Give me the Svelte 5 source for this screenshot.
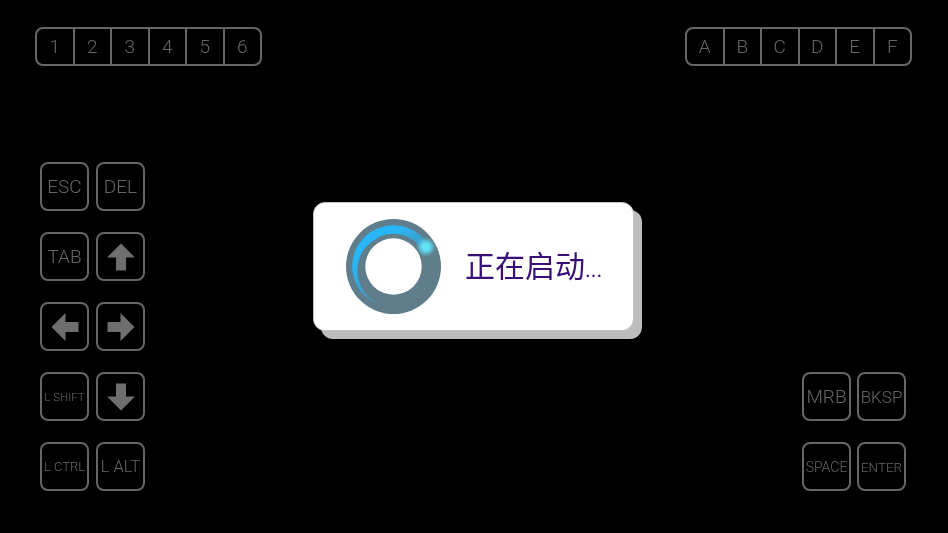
<script>
  const nums = ['1', '2', '3', '4', '5', '6'];
  const letters = ['A', 'B', 'C', 'D', 'E', 'F'];
  const leftKeys = [
    { t: 'ESC', s: 's19' }, { t: 'DEL', s: 's19' },
    { t: 'TAB', s: 's19' }, { i: 0 },
    { i: 270 }, { i: 90 },
    { t: 'L SHIFT', s: 's115' }, { i: 180 },
    { t: 'L CTRL', s: 's13' }, { t: 'L ALT', s: 's165' }
  ];
  const rightKeys = [
    { t: 'MRB', s: 's19' }, { t: 'BKSP', s: 's17' },
    { t: 'SPACE', s: 's14' }, { t: 'ENTER', s: 's135' }
  ];

  const cx = 50, cy = 50, N = 60;
  const pt = (r, a) => {
    const rad = (a * Math.PI) / 180;
    return `${(cx + r * Math.sin(rad)).toFixed(2)} ${(cy - r * Math.cos(rad)).toFixed(2)}`;
  };
  const start = 59, end = -167;
  const segs = Array.from({ length: N }, (_, i) => {
    const f = i / N;
    const a0 = start + (end - start) * f;
    const a1 = start + (end - start) * (f + 1 / N + 0.004);
    const w = f < 0.4 ? 8.4 : 8.4 * (1 - (f - 0.4) / 0.6) + 0.3;
    const op = f < 0.22 ? 0.45 + (f / 0.22) * 0.55 : f > 0.65 ? Math.max(0, 1 - (f - 0.65) / 0.35) : 1;
    const ro = 41.2, ri = ro - w;
    return {
      d: `M${pt(ro, a0)} A${ro} ${ro} 0 0 0 ${pt(ro, a1)} L${pt(ri, a1)} A${ri} ${ri} 0 0 1 ${pt(ri, a0)}Z`,
      op: op.toFixed(3)
    };
  });
</script>

{#snippet key(k)}
  <div class="key {k.s ?? ''}">
    {#if k.t}
      {k.t}
    {:else}
      <svg class="arrow" viewBox="0 0 28 28" style="transform: rotate({k.i}deg)" aria-hidden="true">
        <path d="M14 0.5 L28 14.5 L19 14.5 L19 27.5 L9 27.5 L9 14.5 L0 14.5 Z" />
      </svg>
    {/if}
  </div>
{/snippet}

<div class="screen">
  <header class="top">
    <div class="strip">
      {#each nums as n}<div class="cell">{n}</div>{/each}
    </div>
    <div class="strip">
      {#each letters as n}<div class="cell">{n}</div>{/each}
    </div>
  </header>

  <main class="controls">
    <div class="keys left">
      {#each leftKeys as k}{@render key(k)}{/each}
    </div>
    <div class="keys right">
      {#each rightKeys as k}{@render key(k)}{/each}
    </div>
  </main>

  <div class="dialog">
    <svg class="ring" viewBox="2.5 2.5 95 95" aria-hidden="true">
      <defs>
        <radialGradient id="glow">
          <stop offset="0" stop-color="#66e6f7" />
          <stop offset="0.4" stop-color="#60def2" />
          <stop offset="1" stop-color="#5fc8e0" stop-opacity="0" />
        </radialGradient>
      </defs>
      <circle cx="50" cy="50" r="47.5" fill="#607d8b" />
      {#each segs as s}
        <path d={s.d} fill="#29b6f6" opacity={s.op} />
      {/each}
      <circle cx="82.5" cy="30.5" r="10" fill="url(#glow)" />
      <circle cx="50" cy="50" r="28.2" fill="#fff" />
    </svg>
    <span class="label">正在启动<span class="dots">...</span></span>
  </div>
</div>

<style>
  :global(body) {
    margin: 0;
    background: #000;
  }
  .screen {
    position: relative;
    width: 948px;
    height: 533px;
    box-sizing: border-box;
    padding: 27px 36px 0 35px;
    background: #000;
    overflow: hidden;
    font-family: Roboto, "Noto Sans CJK SC", sans-serif;
    font-weight: 350;
    color: #666;
  }
  .top {
    display: flex;
    justify-content: space-between;
    will-change: transform;
  }
  .strip {
    display: flex;
    width: 227px;
    height: 39px;
    box-sizing: border-box;
    border: 2px solid #666;
    border-radius: 8px;
  }
  .cell {
    flex: 1;
    display: flex;
    align-items: center;
    justify-content: center;
    font-size: 19px;
    border-left: 2px solid #666;
  }
  .cell:first-child {
    border-left: 0;
  }
  .controls {
    display: flex;
    justify-content: space-between;
    align-items: flex-end;
    height: 329px;
    margin-top: 96px;
    padding: 0 6px 0 5px;
    will-change: transform;
  }
  .keys {
    display: grid;
    grid-template-columns: 49px 49px;
    grid-auto-rows: 49px;
    row-gap: 21px;
  }
  .left {
    column-gap: 7px;
  }
  .right {
    column-gap: 6px;
  }
  .key {
    display: flex;
    align-items: center;
    justify-content: center;
    box-sizing: border-box;
    border: 2px solid #666;
    border-radius: 8px;
    white-space: nowrap;
  }
  .s19 {
    font-size: 19px;
  }
  .s17 {
    font-size: 17px;
  }
  .s165 {
    font-size: 16.5px;
  }
  .s14 {
    font-size: 14px;
  }
  .s135 {
    font-size: 13.5px;
  }
  .s13 {
    font-size: 13px;
  }
  .s115 {
    font-size: 11.5px;
  }
  .arrow {
    width: 28px;
    height: 28px;
    display: block;
  }
  .arrow path {
    fill: #6e6e6e;
  }
  .dialog {
    position: absolute;
    left: 313px;
    top: 202px;
    width: 321px;
    height: 129px;
    box-sizing: border-box;
    display: flex;
    align-items: center;
    padding-left: 32px;
    gap: 24px;
    background: #fff;
    border: 1.5px solid #c4c4c4;
    border-radius: 12px;
    box-shadow: 8px 8px 0 #bdbdbd;
  }
  .ring {
    width: 95px;
    height: 95px;
    flex: none;
  }
  .label {
    font-size: 30px;
    font-weight: 400;
    color: #3a0f78;
    white-space: nowrap;
    padding-bottom: 5px;
  }
  .dots {
    font-size: 22px;
  }
</style>
